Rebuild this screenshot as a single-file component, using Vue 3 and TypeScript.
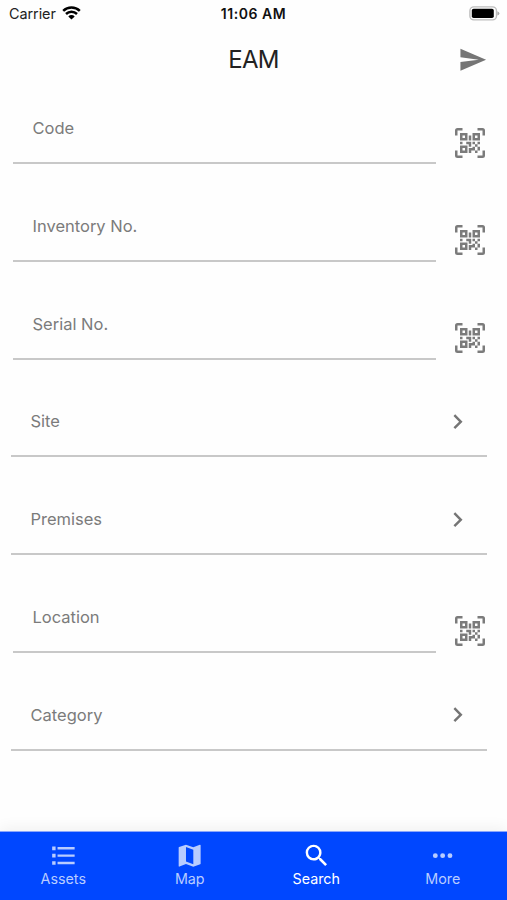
<script setup lang="ts">
interface Field {
  label: string
  kind: 'scan' | 'select'
}

interface Tab {
  label: string
  icon: string
  active?: boolean
}

const fields: Field[] = [
  { label: 'Code', kind: 'scan' },
  { label: 'Inventory No.', kind: 'scan' },
  { label: 'Serial No.', kind: 'scan' },
  { label: 'Site', kind: 'select' },
  { label: 'Premises', kind: 'select' },
  { label: 'Location', kind: 'scan' },
  { label: 'Category', kind: 'select' },
]

const tabs: Tab[] = [
  {
    label: 'Assets',
    icon: 'M7 5H21V7H7ZM7 11H21V13H7ZM7 17H21V19H7ZM2.6 4.5H5.4V7.5H2.6ZM2.6 10.5H5.4V13.5H2.6ZM2.6 16.5H5.4V19.5H2.6Z',
  },
  {
    label: 'Map',
    icon: 'M15,19L9,16.89V5L15,7.11M20.5,3C20.44,3 20.39,3 20.34,3L15,5.1L9,3L3.36,4.9C3.15,4.97 3,5.15 3,5.38V20.5A0.5,0.5 0 0,0 3.5,21C3.55,21 3.61,21 3.66,20.97L9,18.9L15,21L20.64,19.1C20.85,19 21,18.85 21,18.62V3.5A0.5,0.5 0 0,0 20.5,3Z',
  },
  {
    label: 'Search',
    icon: 'M9.5,3A6.5,6.5 0 0,1 16,9.5C16,11.11 15.41,12.59 14.44,13.73L14.71,14H15.5L20.5,19L19,20.5L14,15.5V14.71L13.73,14.44C12.59,15.41 11.11,16 9.5,16A6.5,6.5 0 0,1 3,9.5A6.5,6.5 0 0,1 9.5,3M9.5,5C7,5 5,7 5,9.5C5,12 7,14 9.5,14C12,14 14,12 14,9.5C14,7 12,5 9.5,5Z',
    active: true,
  },
  {
    label: 'More',
    icon: 'M16,12A2,2 0 0,1 18,10A2,2 0 0,1 20,12A2,2 0 0,1 18,14A2,2 0 0,1 16,12M10,12A2,2 0 0,1 12,10A2,2 0 0,1 14,12A2,2 0 0,1 12,14A2,2 0 0,1 10,12M4,12A2,2 0 0,1 6,10A2,2 0 0,1 8,12A2,2 0 0,1 6,14A2,2 0 0,1 4,12Z',
  },
]

const scanIcon =
  'M4,4H10V10H4V4M20,4V10H14V4H20M14,15H16V13H14V11H16V13H18V11H20V13H18V15H20V18H18V20H16V18H13V20H11V16H14V15M16,15V18H18V15H16M4,20V14H10V20H4M6,6V8H8V6H6M16,6V8H18V6H16M6,16V18H8V16H6M4,11H6V13H4V11M9,11H13V15H11V13H9V11M11,6H13V10H11V6M2,2V6H0V2A2,2 0 0,1 2,0H6V2H2M22,0A2,2 0 0,1 24,2V6H22V2H18V0H22M2,18V22H6V24H2A2,2 0 0,1 0,22V18H2M22,22V18H24V22A2,2 0 0,1 22,24H18V22H22Z'
</script>

<template>
  <div class="screen">
    <div class="status">
      <div class="carrier">
        <span>Carrier</span>
        <svg class="wifi" viewBox="0 0 19 14">
          <path d="M1.2 4.9A12 12 0 0 1 17.8 4.9" />
          <path d="M4 8A8 8 0 0 1 15 8" />
          <path class="dot" d="M9.5 13.6L6.3 10.4A4.6 4.6 0 0 1 12.7 10.4Z" />
        </svg>
      </div>
      <span class="time">11:06 AM</span>
      <svg class="battery" viewBox="0 0 31 15">
        <rect class="shell" x="0.9" y="0.9" width="26.6" height="13" rx="4" />
        <rect class="charge" x="2.8" y="2.8" width="22" height="9.2" rx="1.8" />
        <path class="cap" d="M28.4 5.2Q30.4 5.9 30.4 7.4Q30.4 8.9 28.4 9.6Z" />
      </svg>
    </div>

    <header class="header">
      <h1>EAM</h1>
      <button class="send" aria-label="Send">
        <svg viewBox="0 0 24 24"><path d="M2,21L23,12L2,3V10L17,12L2,14V21Z" /></svg>
      </button>
    </header>

    <main class="form">
      <div v-for="field in fields" :key="field.label" class="row" :class="field.kind">
        <div class="field">
          <span class="label">{{ field.label }}</span>
          <svg v-if="field.kind === 'select'" class="chevron" viewBox="0 0 24 24">
            <path d="M8.59,16.58L13.17,12L8.59,7.41L10,6L16,12L10,18L8.59,16.58Z" />
          </svg>
        </div>
        <svg v-if="field.kind === 'scan'" class="qr" viewBox="0 0 24 24">
          <path :d="scanIcon" />
        </svg>
      </div>
    </main>

    <nav class="tabs">
      <div v-for="tab in tabs" :key="tab.label" class="tab" :class="{ active: tab.active }">
        <svg viewBox="0 0 24 24"><path :d="tab.icon" /></svg>
        <span>{{ tab.label }}</span>
      </div>
    </nav>
  </div>
</template>

<style>
body {
  margin: 0;
  background: #fefefe;
}
</style>

<style scoped>
.screen {
  display: flex;
  flex-direction: column;
  width: 507px;
  height: 900px;
  overflow: hidden;
  background: #fefefe;
  font-family: Inter, 'Liberation Sans', sans-serif;
}

.status {
  display: grid;
  grid-template-columns: 1fr auto 1fr;
  align-items: center;
  height: 27px;
  padding: 0 7px 0 9px;
  box-sizing: border-box;
  font-size: 14.4px;
  color: #222;
}

.carrier {
  display: flex;
  align-items: center;
  gap: 6px;
  letter-spacing: -0.05px;
}

.wifi {
  width: 19px;
  height: 14px;
  margin-top: -2px;
}

.wifi path {
  fill: none;
  stroke: #000;
  stroke-width: 2.5;
}

.wifi .dot {
  fill: #000;
  stroke: none;
}

.time {
  margin-right: 2px;
  font-size: 14px;
  font-weight: 600;
  letter-spacing: 0.55px;
  color: #111;
}

.battery {
  justify-self: end;
  width: 31px;
  height: 15px;
}

.shell {
  fill: #fefefe;
  stroke: #bdbdbd;
  stroke-width: 1.4;
}

.charge {
  fill: #000;
}

.cap {
  fill: #aaa;
}

.header {
  display: grid;
  grid-template-columns: 1fr auto 1fr;
  align-items: center;
  height: 65px;
  flex: none;
}

.header h1 {
  grid-column: 2;
  margin: 0;
  font-size: 24px;
  font-weight: 400;
  line-height: 30px;
  letter-spacing: -0.8px;
  color: #222;
}

.send {
  justify-self: end;
  width: 29.3px;
  height: 29.3px;
  margin: 0 20px 0 0;
  padding: 0;
  border: 0;
  background: none;
}

.send svg {
  display: block;
  width: 100%;
  height: 100%;
  fill: #757575;
}

.form {
  flex: 1;
}

.row {
  display: flex;
  align-items: flex-end;
  height: 97.8px;
  padding: 0 20px 0 11px;
  box-sizing: border-box;
}

.row:first-child {
  height: 72px;
}

.row.scan {
  padding: 0 22px 0 13px;
  justify-content: space-between;
}

.field {
  display: flex;
  justify-content: space-between;
  align-items: center;
  flex: 1;
  height: 72px;
  padding: 2px 14.5px 0 19.5px;
  box-sizing: border-box;
  border-bottom: 2px solid #c8c8c8;
}

.scan .field {
  flex: none;
  width: 423px;
}

.label {
  font-size: 16.5px;
  line-height: 22px;
  color: #7b7b7b;
}

.chevron {
  width: 29.3px;
  height: 29.3px;
  fill: #757575;
}

.qr {
  width: 30px;
  height: 30px;
  margin-bottom: 6.5px;
  fill: #7b7b7b;
}

.tabs {
  display: grid;
  grid-template-columns: repeat(4, 1fr);
  flex: none;
  height: 69px;
  padding-right: 1px;
  box-sizing: border-box;
  border-top: 1px solid #8ba6fb;
  background: #0047ff;
  box-shadow: 0 -3px 14px rgba(0, 0, 0, 0.06);
}

.tab {
  display: flex;
  flex-direction: column;
  align-items: center;
  padding-top: 9.4px;
  font-size: 14.3px;
  line-height: 16px;
  color: #b8ccff;
}

.tab svg {
  width: 29.3px;
  height: 29.3px;
  fill: currentColor;
}

.tab.active {
  color: #fff;
}
</style>
